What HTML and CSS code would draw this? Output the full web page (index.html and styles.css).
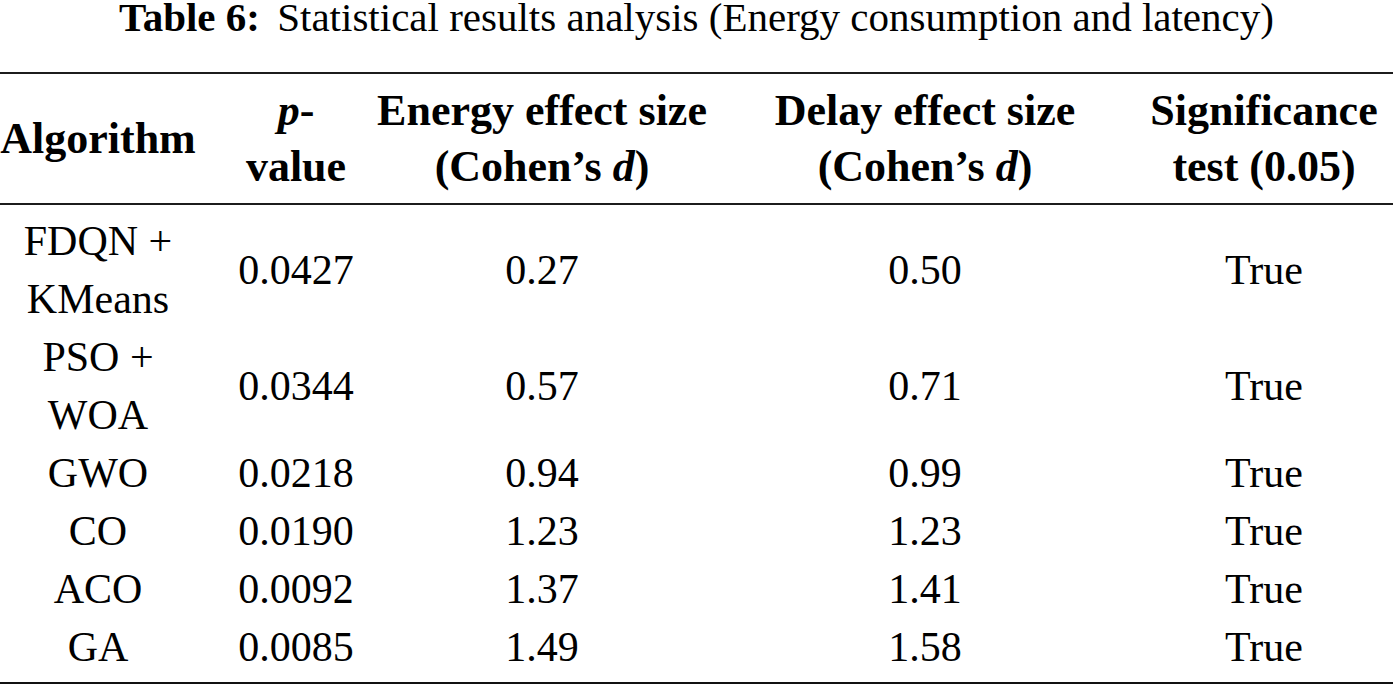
FILE: index.html
```html
<!DOCTYPE html>
<html lang="en">
<head>
<meta charset="utf-8">
<title>Table 6</title>
<link rel="stylesheet" href="styles.css">
</head>
<body>
<div class="title"><span class="label">Table 6:</span> Statistical results analysis (Energy consumption and latency)</div>
<table class="stats">
  <colgroup>
    <col class="c1"><col class="c2"><col class="c3"><col class="c4"><col class="c5">
  </colgroup>
  <thead>
    <tr>
      <th><div class="cell">Algorithm</div></th>
      <th><div class="cell"><span><i>p</i>-<br>value</span></div></th>
      <th><div class="cell"><span>Energy effect size<br>(Cohen’s <i>d</i>)</span></div></th>
      <th><div class="cell"><span>Delay effect size<br>(Cohen’s <i>d</i>)</span></div></th>
      <th class="last"><div class="cell"><span>Significance<br>test (0.05)</span></div></th>
    </tr>
  </thead>
  <tbody>
    <tr class="first">
      <td><div class="cell"><span>FDQN +<br>KMeans</span></div></td>
      <td><div class="cell">0.0427</div></td>
      <td><div class="cell">0.27</div></td>
      <td><div class="cell">0.50</div></td>
      <td class="last"><div class="cell">True</div></td>
    </tr>
    <tr>
      <td><div class="cell"><span>PSO +<br>WOA</span></div></td>
      <td><div class="cell">0.0344</div></td>
      <td><div class="cell">0.57</div></td>
      <td><div class="cell">0.71</div></td>
      <td class="last"><div class="cell">True</div></td>
    </tr>
    <tr>
      <td><div class="cell">GWO</div></td>
      <td><div class="cell">0.0218</div></td>
      <td><div class="cell">0.94</div></td>
      <td><div class="cell">0.99</div></td>
      <td class="last"><div class="cell">True</div></td>
    </tr>
    <tr>
      <td><div class="cell">CO</div></td>
      <td><div class="cell">0.0190</div></td>
      <td><div class="cell">1.23</div></td>
      <td><div class="cell">1.23</div></td>
      <td class="last"><div class="cell">True</div></td>
    </tr>
    <tr>
      <td><div class="cell">ACO</div></td>
      <td><div class="cell">0.0092</div></td>
      <td><div class="cell">1.37</div></td>
      <td><div class="cell">1.41</div></td>
      <td class="last"><div class="cell">True</div></td>
    </tr>
    <tr class="final">
      <td><div class="cell">GA</div></td>
      <td><div class="cell">0.0085</div></td>
      <td><div class="cell">1.49</div></td>
      <td><div class="cell">1.58</div></td>
      <td class="last"><div class="cell">True</div></td>
    </tr>
  </tbody>
</table>
</body>
</html>
```

FILE: styles.css
```css
html, body {
  margin: 0;
  padding: 0;
  background: #ffffff;
}

body {
  font-family: "Liberation Serif", "Times New Roman", serif;
  color: #000000;
  width: 1393px;
  overflow: hidden;
}

.title {
  font-size: 41px;
  line-height: 34px;
  text-align: center;
  margin: 0 0 38px 0;
  white-space: nowrap;
}

.title .label {
  font-weight: bold;
  margin-right: 7px;
}

.stats {
  width: 1393px;
  table-layout: fixed;
  border-collapse: collapse;
  border-top: 2px solid #1c1c1c;
  border-bottom: 2px solid #111111;
}

.c1 { width: 196px; }
.c2 { width: 200px; }
.c3 { width: 292px; }
.c4 { width: 474px; }
.c5 { width: 231px; }

.stats th,
.stats td {
  padding: 0;
  text-align: center;
  vertical-align: middle;
}

.stats th.last,
.stats td.last {
  padding-right: 27px;
}

.stats thead tr {
  border-bottom: 2px solid #1c1c1c;
}

.stats th {
  font-size: 44px;
  line-height: 56px;
  font-weight: bold;
  height: 131px;
  box-sizing: border-box;
}

.stats td {
  font-size: 42px;
  line-height: 58px;
  font-weight: normal;
}

.stats tr.first td {
  padding-top: 7px;
}

.stats tr.final td {
  padding-bottom: 6px;
}

.cell {
  display: flex;
  justify-content: center;
  white-space: nowrap;
}

.cell > span {
  display: block;
  text-align: center;
}
```
